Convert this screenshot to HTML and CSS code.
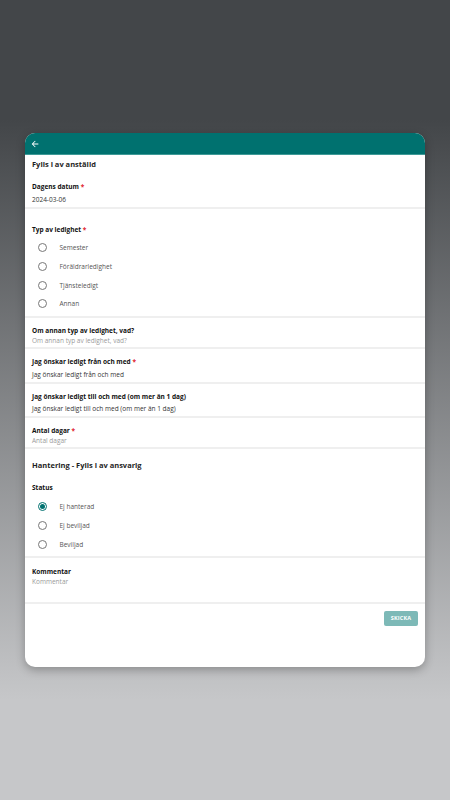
FILE: index.html
```html
<!DOCTYPE html>
<html lang="sv">
<head>
<meta charset="utf-8">
<title>Ledighetsansökan</title>
<link rel="stylesheet" href="styles.css">
</head>
<body>
<div class="card">
  <header class="bar">
    <svg class="back" width="10" height="10" viewBox="0 0 24 24"><path d="M20 11H7.83l5.59-5.59L12 4l-8 8 8 8 1.41-1.41L7.830 13H20v-2z" fill="#fff"/></svg>
  </header>
  <div class="content">
    <h2 class="section first">Fylls i av anställd</h2>
    <div class="field f-date">
      <div class="label">Dagens datum <span class="req">*</span></div>
      <div class="value">2024-03-06</div>
    </div>
    <div class="field f-radio">
      <div class="label">Typ av ledighet <span class="req">*</span></div>
      <div class="radios">
        <div class="radio"><span class="dot"></span><span>Semester</span></div>
        <div class="radio"><span class="dot"></span><span>Föräldrarledighet</span></div>
        <div class="radio"><span class="dot"></span><span>Tjänsteledigt</span></div>
        <div class="radio"><span class="dot"></span><span>Annan</span></div>
      </div>
    </div>
    <div class="field f-tight">
      <div class="label">Om annan typ av ledighet, vad?</div>
      <div class="placeholder">Om annan typ av ledighet, vad?</div>
    </div>
    <div class="field f-loose">
      <div class="label">Jag önskar ledigt från och med <span class="req">*</span></div>
      <div class="value">Jag önskar ledigt från och med</div>
    </div>
    <div class="field f-loose">
      <div class="label">Jag önskar ledigt till och med (om mer än 1 dag)</div>
      <div class="value">Jag önskar ledigt till och med (om mer än 1 dag)</div>
    </div>
    <div class="field f-tight">
      <div class="label">Antal dagar <span class="req">*</span></div>
      <div class="placeholder">Antal dagar</div>
    </div>
    <h2 class="section second">Hantering - Fylls i av ansvarig</h2>
    <div class="field f-status">
      <div class="label">Status</div>
      <div class="radios">
        <div class="radio"><span class="dot checked"></span><span>Ej hanterad</span></div>
        <div class="radio"><span class="dot"></span><span>Ej beviljad</span></div>
        <div class="radio"><span class="dot"></span><span>Beviljad</span></div>
      </div>
    </div>
    <div class="field f-comment">
      <div class="label">Kommentar</div>
      <div class="placeholder">Kommentar</div>
    </div>
    <div class="actions">
      <button class="send" type="button">SKICKA</button>
    </div>
  </div>
</div>
</body>
</html>
```
FILE: styles.css
```css
* { box-sizing: border-box; }
html, body { margin: 0; padding: 0; }
body {
  width: 450px;
  height: 800px;
  overflow: hidden;
  background: linear-gradient(180deg, #434649 0px, #434649 120px, #c6c7c9 700px, #c6c7c9 800px);
  font-family: "Open Sans", "Liberation Sans", sans-serif;
  padding-top: 133px;
}
.card {
  margin-left: 25px;
  width: 400px;
  height: 534px;
  background: #fff;
  border-radius: 10px;
  overflow: hidden;
  box-shadow: 0 3px 10px rgba(0, 0, 0, 0.28);
}
.bar {
  height: 22px;
  background: #00716f;
  display: flex;
  align-items: center;
  padding-left: 5px;
  border-bottom: 1px solid #3e9a97;
}
.back { display: block; }
.content { display: flex; flex-direction: column; }
.section {
  margin: 0;
  padding-left: 7px;
  font-size: 7.5px;
  line-height: 12px;
  font-weight: 700;
  color: #1e1e1e;
}
.section.first { padding-top: 3px; }
.section.second { padding-top: 10px; }
.field {
  padding-left: 7px;
  padding-right: 7px;
  border-bottom: 2px solid #efefef;
}
.label {
  font-size: 6.5px;
  line-height: 10px;
  font-weight: 700;
  color: #111;
}
.req { color: #e0202a; }
.value {
  font-size: 6.5px;
  line-height: 10px;
  color: #333;
}
.placeholder {
  font-size: 6.5px;
  line-height: 10px;
  color: #9a9a9a;
}
.f-date { padding-top: 12px; padding-bottom: 2px; }
.f-date .value { margin-top: 3px; }
.f-radio { padding-top: 16px; padding-bottom: 3px; }
.f-tight { padding-top: 8px; padding-bottom: 1px; }
.f-loose { padding-top: 8px; padding-bottom: 2px; }
.f-loose .value { margin-top: 2.5px; }
.f-status { padding-top: 12px; padding-bottom: 2px; }
.f-comment { padding-top: 9px; padding-bottom: 15px; }
.radios { margin-top: 3.5px; display: flex; flex-direction: column; }
.f-status .radios { margin-top: 4.5px; }
.radio {
  height: 18.67px;
  display: flex;
  align-items: center;
  padding-left: 6px;
  font-size: 6.5px;
  color: #555;
}
.dot {
  width: 9px;
  height: 9px;
  border: 1px solid #777;
  border-radius: 50%;
  margin-right: 12.5px;
  flex: none;
  display: flex;
  align-items: center;
  justify-content: center;
}
.dot.checked { border-color: #00716f; }
.dot.checked::after {
  content: "";
  width: 5px;
  height: 5px;
  border-radius: 50%;
  background: #00716f;
}
.actions {
  display: flex;
  justify-content: flex-end;
  padding: 7px 7px 0;
}
.send {
  width: 34px;
  height: 15px;
  border: 0;
  border-radius: 2px;
  background: #7db9b7;
  color: #fff;
  font-family: "Open Sans", "Liberation Sans", sans-serif;
  font-size: 5.5px;
  font-weight: 700;
  letter-spacing: 0.2px;
  padding: 0;
}
```
